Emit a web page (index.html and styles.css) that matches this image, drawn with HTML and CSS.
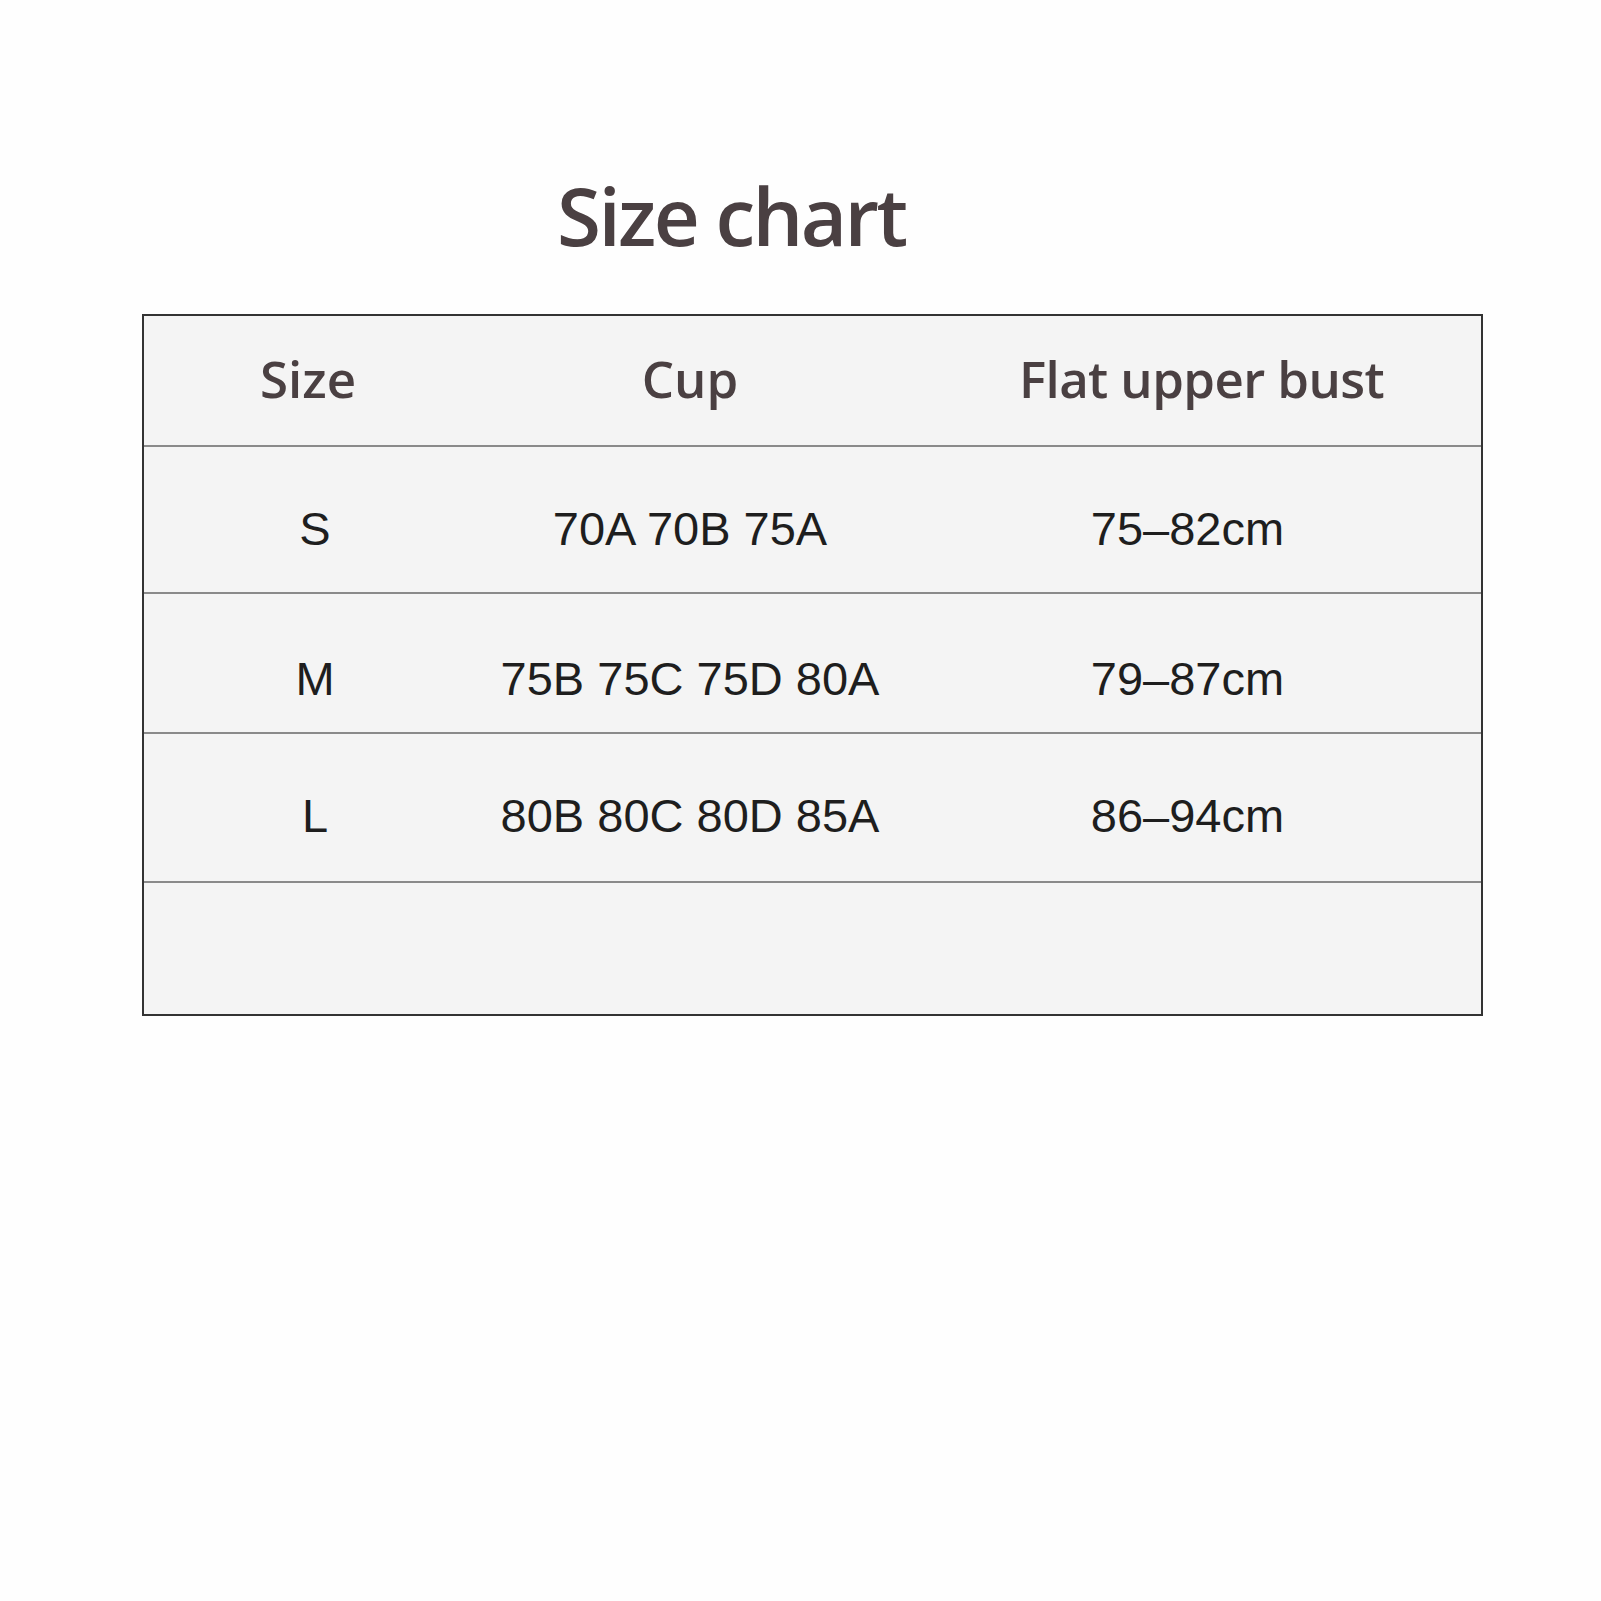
FILE: index.html
```html
<!DOCTYPE html>
<html>
<head>
<meta charset="utf-8">
<link rel="stylesheet" href="styles.css">
</head>
<body>
<div class="page">
  <h1 class="title">Size chart</h1>
  <div class="chart">
    <div class="row head">
      <div class="cell c1">Size</div>
      <div class="cell c2">Cup</div>
      <div class="cell c3">Flat upper bust</div>
    </div>
    <div class="row r1">
      <div class="cell c1">S</div>
      <div class="cell c2">70A 70B 75A</div>
      <div class="cell c3">75–82cm</div>
    </div>
    <div class="row r2">
      <div class="cell c1">M</div>
      <div class="cell c2">75B 75C 75D 80A</div>
      <div class="cell c3">79–87cm</div>
    </div>
    <div class="row r3">
      <div class="cell c1">L</div>
      <div class="cell c2">80B 80C 80D 85A</div>
      <div class="cell c3">86–94cm</div>
    </div>
    <div class="row r4"></div>
  </div>
</div>
</body>
</html>
```

FILE: styles.css
```css
html, body {
  margin: 0;
  padding: 0;
  background: #fefefe;
}
.page {
  width: 1601px;
  height: 1601px;
  padding-top: 160px;
  box-sizing: border-box;
}
.title {
  margin: 0 0 0 557px;
  font-family: "Open Sans", sans-serif;
  font-weight: 600;
  font-size: 80px;
  line-height: 110px;
  color: #4a4042;
  letter-spacing: -2.6px;
}
.chart {
  margin: 44px 0 0 142px;
  width: 1341px;
  border: 2px solid #333;
  box-sizing: border-box;
  background: #f4f4f4;
}
.row {
  display: grid;
  grid-template-columns: 332px 428px 1fr;
  align-items: center;
  box-sizing: border-box;
  border-bottom: 2px solid #8a8a8a;
}
.row.r4 { border-bottom: none; height: 131px; }
.cell {
  text-align: center;
}
.head {
  height: 131px;
  padding-bottom: 6px;
  font-family: "Open Sans", sans-serif;
  font-weight: 600;
  font-size: 51px;
  color: #4a4042;
}
.head .c1 { padding-right: 4px; }
.head .c3 { padding-left: 18px; letter-spacing: -0.6px; }
.r1, .r2, .r3 {
  font-family: "Liberation Sans", Arial, sans-serif;
  font-size: 47px;
  color: #1e1e1e;
}
.r1 { height: 147px; padding-top: 18px; }
.r2 { height: 140px; padding-top: 30px; }
.r3 { height: 149px; padding-top: 16px; }
.r1 .c1, .r2 .c1, .r3 .c1 { padding-left: 10px; }
.r1 .c3, .r2 .c3, .r3 .c3 { padding-right: 10px; }
```
